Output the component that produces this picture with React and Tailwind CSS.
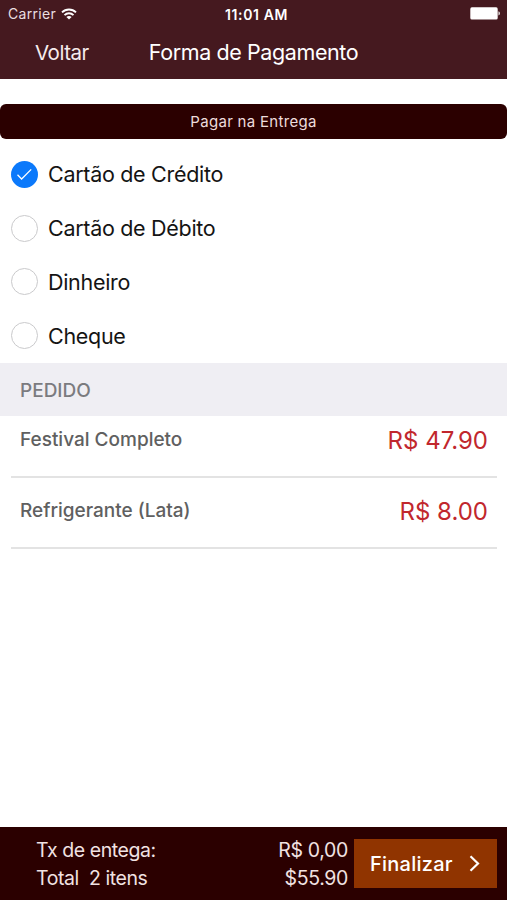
import { useState } from "react";

const METHODS = ["Cartão de Crédito", "Cartão de Débito", "Dinheiro", "Cheque"];

const ITEMS = [
  { name: "Festival Completo", price: "R$ 47.90", spacing: "h-[62px] pt-[11px]" },
  { name: "Refrigerante (Lata)", price: "R$ 8.00", spacing: "h-[71px] pt-[20px]" },
];

function WifiIcon() {
  return (
    <svg width="16" height="12" viewBox="0 0 16 12" fill="none" stroke="#fff" strokeWidth="1.9">
      <path d="M1 4.4C4.9 0.6 11.1 0.6 15 4.4" />
      <path d="M3.5 7.1C6 4.7 10 4.7 12.5 7.1" />
      <path d="M8 11.6L5.4 9C6.8 7.7 9.2 7.7 10.6 9Z" fill="#fff" stroke="none" />
    </svg>
  );
}

function BatteryIcon() {
  return (
    <svg width="31" height="13" viewBox="0 0 31 13" fill="#fff">
      <rect x="0.3" y="0.3" width="27.4" height="12.2" rx="1.6" />
      <path d="M28.5 4.3C30.3 4.9 30.3 7.9 28.5 8.5Z" />
    </svg>
  );
}

function StatusBar() {
  return (
    <div className="grid grid-cols-3 items-center h-[27px] pl-2 pr-[6px]">
      <div className="flex items-center gap-[5px]">
        <span className="text-[14px] tracking-[0.3px] text-[#eadfe0]">Carrier</span>
        <WifiIcon />
      </div>
      <div className="pl-[4px] pt-px text-center text-[14px] tracking-[0.6px] font-semibold whitespace-nowrap">
        11:01 AM
      </div>
      <div className="flex justify-end">
        <BatteryIcon />
      </div>
    </div>
  );
}

function Method({ label, checked, onSelect }) {
  return (
    <button onClick={onSelect} className="flex items-center h-[53.8px] w-full pl-[11px] gap-[10px]">
      {checked ? (
        <span className="flex items-center justify-center size-[27px] rounded-full bg-[#0b79fb]">
          <svg width="17" height="13" viewBox="0 0 17 13" fill="none" stroke="#fff" strokeWidth="1.3">
            <path d="M1.5 6.8L5.6 11L15.2 1.4" />
          </svg>
        </span>
      ) : (
        <span className="size-[27px] rounded-full border-[1.5px] border-[#cacacc]" />
      )}
      <span className="pt-px text-[21.5px] leading-none tracking-[-0.3px] text-[#141414]">{label}</span>
    </button>
  );
}

export default function App() {
  const [selected, setSelected] = useState(0);

  return (
    <div className="flex flex-col w-[507px] h-[900px] overflow-hidden bg-white font-['Inter',sans-serif]">
      <header className="h-[79px] shrink-0 bg-[#45191f] text-white">
        <StatusBar />
        <div className="grid grid-cols-[1fr_auto_1fr] items-center h-[50px]">
          <button className="text-left pl-[35px] pt-[2px] text-[20.5px] tracking-[-0.5px] text-[#f5eced]">
            Voltar
          </button>
          <h1 className="text-[21.5px] tracking-[-0.4px]">Forma de Pagamento</h1>
        </div>
      </header>

      <div className="mt-[25px] flex items-center justify-center h-[35px] shrink-0 pt-px rounded-md bg-[#2b0000] text-[15px] tracking-[0.3px] text-[#eddcdc]">
        Pagar na Entrega
      </div>

      <div className="pt-[8.5px] shrink-0">
        {METHODS.map((label, i) => (
          <Method
            key={label}
            label={label}
            checked={selected === i}
            onSelect={() => setSelected(i)}
          />
        ))}
      </div>

      <div className="flex items-center h-[53px] shrink-0 pl-5 pt-[5px] bg-[#efeef3] text-[19px] font-medium text-[#7b7b7f]">
        PEDIDO
      </div>

      <ul className="grow pl-[11px] pr-[10px]">
        {ITEMS.map((item) => (
          <li
            key={item.name}
            className={`flex justify-between items-start px-[9px] border-b-2 border-[#e3e3e3] ${item.spacing}`}
          >
            <span className="text-[19px] leading-[26px] font-medium text-[#606060]">{item.name}</span>
            <span className="text-[24px] leading-[28px] text-[#c1272d]">{item.price}</span>
          </li>
        ))}
      </ul>

      <footer className="flex h-[73px] shrink-0 pl-9 pr-[10px] bg-[#2b0000] text-[19.5px] leading-[28px] text-[#f1e2e2]">
        <div className="grow pt-[9px] whitespace-pre tracking-[-0.42px]">
          <div>Tx de entega:</div>
          <div>Total  2 itens</div>
        </div>
        <div className="pt-[9px] text-right tracking-[-0.35px]">
          <div>R$ 0,00</div>
          <div>$55.90</div>
        </div>
        <button className="flex items-center justify-between ml-[6px] mt-3 w-[143px] h-[49px] pl-4 pr-[17px] bg-[#903400] text-[20px] tracking-[0.25px] font-medium text-white">
          Finalizar
          <svg width="11" height="17" viewBox="0 0 11 17" fill="none" stroke="#fff" strokeWidth="2.2">
            <path d="M1.5 1.2L9 8.5L1.5 15.8" />
          </svg>
        </button>
      </footer>
    </div>
  );
}
